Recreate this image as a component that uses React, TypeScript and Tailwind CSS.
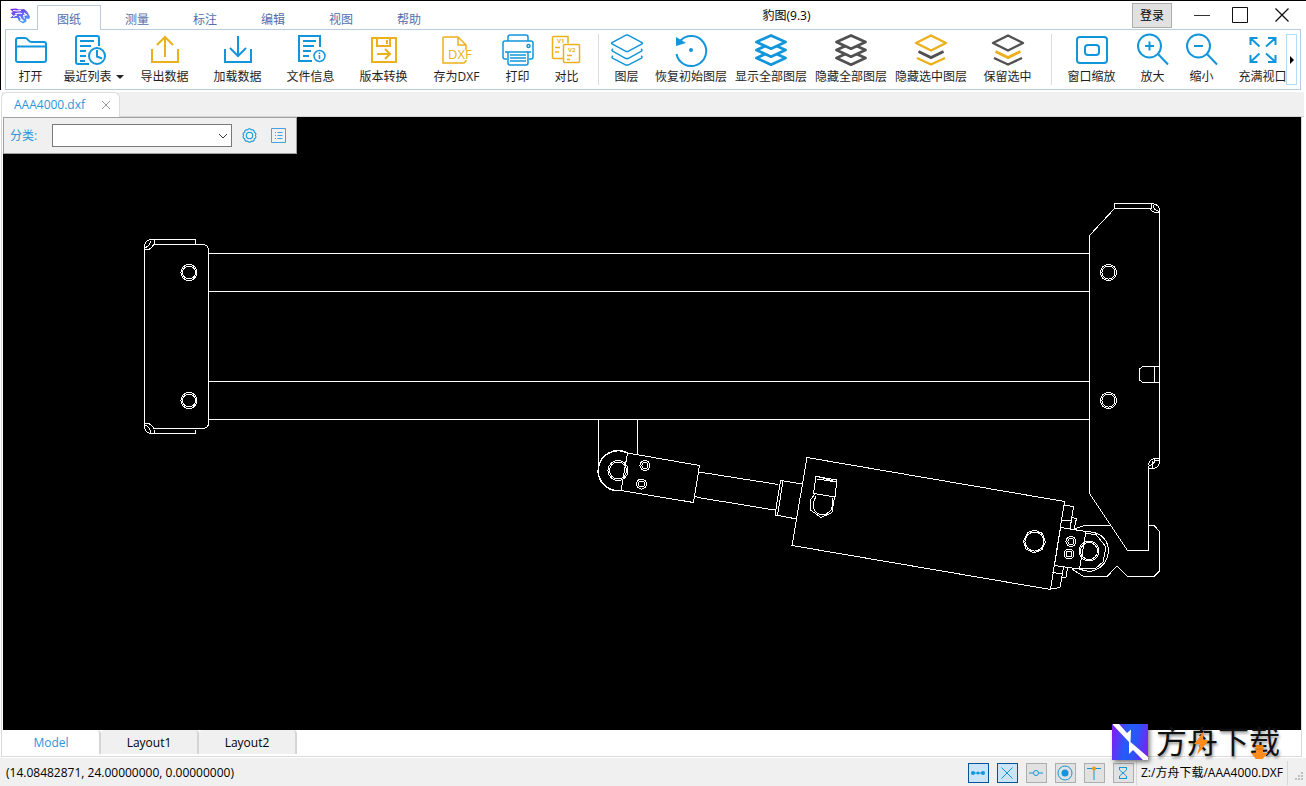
import { useState } from "react";
import type { ReactNode } from "react";
import clsx from "clsx";

const BLUE = "#1296db";
const GOLD = "#ebb01c";
const DARK = "#515151";

interface IconProps {
  color?: string;
  width?: number;
  children: ReactNode;
}

const Icon = ({ color = BLUE, width = 2, children }: IconProps) => (
  <svg
    className="size-8 shrink-0 overflow-visible"
    viewBox="0 0 32 32"
    fill="none"
    stroke={color}
    strokeWidth={width}
    aria-hidden="true"
  >
    {children}
  </svg>
);

const OpenIcon = () => (
  <Icon>
    <path d="M1 6a2 2 0 0 1 2-2h7c3 0 3 4 7 4h12a2 2 0 0 1 2 2v16a2 2 0 0 1-2 2H3a2 2 0 0 1-2-2zM1 12.500h30" />
  </Icon>
);

const RecentIcon = () => (
  <Icon>
    <path d="M25 12V4a2 2 0 0 0-2-2H4a2 2 0 0 0-2 2v24a2 2 0 0 0 2 2h11" />
    <path d="M6 7h14M6 12h11M6 17h6M6 22h6M6 27h5" />
    <circle cx="23" cy="22" r="8" />
    <path d="M23 16v6.500l5 2" />
  </Icon>
);

const ExportIcon = () => (
  <Icon color={GOLD}>
    <path d="M3 15v13h26V15M16 23V3M8 11l8-8 8 8" />
  </Icon>
);

const ImportIcon = () => (
  <Icon>
    <path d="M3 15v13h26V15M16 2v20M8 14l8 8 8-8" />
  </Icon>
);

const InfoIcon = () => (
  <Icon>
    <path d="M25 13V2H4v25h13M8 7h13M8 12h11M8 17h8M8 22h6" />
    <circle cx="24.500" cy="22" r="5.500" strokeWidth="1.500" />
    <path d="M24.500 18.500v1.500M24.500 21v4" strokeWidth="1.500" />
  </Icon>
);

const ConvertIcon = () => (
  <Icon color={GOLD}>
    <path d="M4 4h24v24H4zM9 4v8h13V4M19 6v4M9 20h13M17 15l5 5-5 5" />
  </Icon>
);

const DxfIcon = () => (
  <Icon color={GOLD} width={1.5}>
    <path d="M25 16V11l-8-8H3a1 1 0 0 0-1 1v25h21l2-2v-1M17 3v8h8" />
    <text x="7" y="25" fontSize="13" fill={GOLD} stroke="none" className="font-['Open_Sans']">
      DXF
    </text>
  </Icon>
);

const PrintIcon = () => (
  <Icon width={1.5}>
    <path d="M6 7V3a2 2 0 0 1 2-2h16a2 2 0 0 1 2 2v4M5 25H3a2 2 0 0 1-2-2V9a2 2 0 0 1 2-2h26a2 2 0 0 1 2 2v14a2 2 0 0 1-2 2h-2" />
    <path d="M3 18h26M6 18v11a2 2 0 0 0 2 2h16a2 2 0 0 0 2-2V18M8 21h16M8 24h16M8 27h16" />
    <circle cx="26.500" cy="12" r="1.500" />
  </Icon>
);

const CompareIcon = () => (
  <Icon color={GOLD} width={1.5}>
    <path d="M12 24.500H2.500a1 1 0 0 1-1-1V3.500a1 1 0 0 1 1-1H17v7M4 13.500h5M4 18h4" />
    <rect x="12.500" y="10.500" width="16" height="18" rx="1" />
    <path d="M16 21.500h5M16 25.500h3" />
    <g fontSize="6" fontWeight="700" fill={GOLD} stroke="none" className="font-['Open_Sans']">
      <text x="6" y="9">V1</text>
      <text x="17" y="18">V2</text>
    </g>
  </Icon>
);

const LayersIcon = () => (
  <Icon width={1.5}>
    <path d="M14.500 1.300q1.500-.7 3 0L31 8.500q.8.800 0 1.500l-13.500 7.200q-1.500.7-3 0L1 10q-.8-.7 0-1.500z" />
    <path d="M2 15q-2 1.200 0 2.300l12.500 7q1.500.7 3 0L30 17.300q2-1.100 0-2.300M2 22q-2 1.200 0 2.300l12.500 6.500q1.500.7 3 0L30 24.300q2-1.100 0-2.300" />
  </Icon>
);

const RestoreIcon = () => (
  <Icon>
    <path d="M5.500 6.500A15 15 0 1 1 1.500 20" />
    <path d="M1 3v9l10-3z" fill={BLUE} stroke="none" />
    <circle cx="16" cy="16" r="2" fill={BLUE} stroke="none" />
  </Icon>
);

const StackIcon = ({ color }: { color: string }) => (
  <Icon color={color} width={2.8}>
    <g fill="#fff" strokeLinejoin="round">
      <path d="M16 17.500L30.500 24 16 30.700 1.500 24Z" />
      <path d="M16 9.500L30.500 16 16 22.700 1.500 16Z" />
      <path d="M16 1.400L30.500 8 16 14.700 1.500 8Z" />
    </g>
  </Icon>
);

const PartStackIcon = ({ top, middle, bottom }: { top: string; middle: string; bottom: string }) => (
  <Icon width={2.4}>
    <path d="M16 1.500L31 9 16 16.500 1 9Z" stroke={top} strokeLinejoin="round" />
    <path d="M3.500 17.500L16 23.500l12.500-6" stroke={middle} strokeWidth="3" />
    <path d="M2 24L16 30.500 30 24" stroke={bottom} />
  </Icon>
);

const WindowZoomIcon = () => (
  <Icon>
    <rect x="1" y="3" width="30" height="26" rx="3" />
    <rect x="9" y="11" width="14" height="10" rx="3" />
  </Icon>
);

const ZoomIcon = ({ plus }: { plus?: boolean }) => (
  <Icon>
    <circle cx="12.500" cy="12" r="11.500" />
    <path d="M21 20l10 10.500M8 12h9" />
    {plus && <path d="M12.500 7.500v9" />}
  </Icon>
);

const FitIcon = () => (
  <Icon>
    <path d="M3.500 11V4h7M4 4.500l8.500 8M21 4h7.500v7M28 4.500l-9 8M3.500 21v7h7M4 27.500l8.500-8M21 28h7.500v-7M28 27.500l-9-8" />
  </Icon>
);

interface ToolProps {
  label: string;
  icon: ReactNode;
  dropdown?: boolean;
}

const Tool = ({ label, icon, dropdown }: ToolProps) => (
  <button
    type="button"
    className={clsx(
      "flex shrink-0 flex-col items-center pt-1 hover:bg-sky-50",
      label.length <= 2 ? "w-[49px]" : label.length === 6 ? "w-20" : "w-[73px]",
      dropdown && "pr-1"
    )}
  >
    {icon}
    <span className={clsx("flex items-center gap-1 text-xs leading-[22px] whitespace-nowrap", dropdown && "pl-2")}>
      {label}
      {dropdown && <span className="border-x-4 border-t-4 border-x-transparent border-t-[#222]" />}
    </span>
  </button>
);

const Divider = () => <span className="my-1 mr-[3px] ml-[7px] w-px shrink-0 bg-[#dcdcdc]" />;

const menus = ["图纸", "测量", "标注", "编辑", "视图", "帮助"];

const LeopardLogo = () => (
  <svg className="h-4 w-5" viewBox="0 0 20 16" fill="none" aria-hidden="true">
    <defs>
      <linearGradient id="leopard" x1="0.200" y1="0" x2="0.600" y2="1">
        <stop offset="0" stopColor="#7a2cf0" />
        <stop offset="1" stopColor="#4aa4fb" />
      </linearGradient>
    </defs>
    <path
      d="M0 1l6-.5 3 1 5-.5c2 1 3 3 4 4l2 4-1 2-3-.5.500 3L13 15.500 9 13l-1.500-3L0 10l3-2.500L1 5l2-1z"
      fill="url(#leopard)"
    />
    <path
      d="M3 2.500l4 .5 4-.5M5 6l4-1 3 .5M3 8.500l4-1.500M9.500 8l2 3.500 2 1.500M14 5l2.500 2-3 .5 1 3M10 12l3 1"
      stroke="#fff"
      strokeWidth="1.100"
    />
  </svg>
);

const TitleBar = ({ menu, setMenu }: { menu: string; setMenu: (m: string) => void }) => (
  <header className="flex h-7 items-stretch">
    <div className="flex w-9 items-center justify-center pt-0.5 pl-0.5">
      <LeopardLogo />
    </div>
    <nav className="flex gap-1 pt-1">
      {menus.map((m) => (
        <button
          key={m}
          type="button"
          onClick={() => setMenu(m)}
          className={clsx(
            "w-16 border border-b-0 pt-1 text-xs leading-4 text-[#4f70ae]",
            m === menu ? "relative -mb-px border-[#b9cbdc] bg-white" : "-mb-px border-transparent"
          )}
        >
          {m}
        </button>
      ))}
    </nav>
    <h1 className="flex flex-1 items-center justify-center pt-0.5 text-xs text-black">豹图(9.3)</h1>
    <button type="button" className="mt-0.5 h-[25px] w-10 border border-[#adadad] bg-[#e1e1e1] text-xs text-black">
      登录
    </button>
    <div className="ml-3.5 flex gap-1 pr-1">
      <button type="button" aria-label="最小化" className="flex w-8 items-center justify-center">
        <svg className="size-4" viewBox="0 0 16 16" stroke="#333" aria-hidden="true">
          <path d="M0 8.500h16" />
        </svg>
      </button>
      <button type="button" aria-label="最大化" className="flex w-9 items-center justify-center">
        <svg className="size-4" viewBox="0 0 16 16" fill="none" stroke="#111" aria-hidden="true">
          <path d="M.5.500h15v15H.5z" />
        </svg>
      </button>
      <button type="button" aria-label="关闭" className="flex w-10 items-center justify-center">
        <svg className="size-4" viewBox="0 0 16 16" stroke="#111" strokeWidth="1.300" aria-hidden="true">
          <path d="M1.500 1.500l13 13M14.500 1.500l-13 13" />
        </svg>
      </button>
    </div>
  </header>
);

const Ribbon = () => (
  <div className="mr-[5px] ml-1 flex h-[61px] border border-[#b9cbdc] bg-white text-[#1e1e1e]">
    <div className="flex min-w-0 flex-1 overflow-hidden">
      <Tool label="打开" icon={<OpenIcon />} />
      <Tool label="最近列表" icon={<RecentIcon />} dropdown />
      <Tool label="导出数据" icon={<ExportIcon />} />
      <Tool label="加载数据" icon={<ImportIcon />} />
      <Tool label="文件信息" icon={<InfoIcon />} />
      <Tool label="版本转换" icon={<ConvertIcon />} />
      <Tool label="存为DXF" icon={<DxfIcon />} />
      <Tool label="打印" icon={<PrintIcon />} />
      <Tool label="对比" icon={<CompareIcon />} />
      <Divider />
      <Tool label="图层" icon={<LayersIcon />} />
      <Tool label="恢复初始图层" icon={<RestoreIcon />} />
      <Tool label="显示全部图层" icon={<StackIcon color={BLUE} />} />
      <Tool label="隐藏全部图层" icon={<StackIcon color={DARK} />} />
      <Tool label="隐藏选中图层" icon={<PartStackIcon top={GOLD} middle={DARK} bottom={GOLD} />} />
      <Tool label="保留选中" icon={<PartStackIcon top={DARK} middle={GOLD} bottom={DARK} />} />
      <Divider />
      <Tool label="窗口缩放" icon={<WindowZoomIcon />} />
      <Tool label="放大" icon={<ZoomIcon plus />} />
      <Tool label="缩小" icon={<ZoomIcon />} />
      <Tool label="充满视口" icon={<FitIcon />} />
    </div>
    <button
      type="button"
      aria-label="更多"
      className="my-1 mr-[3px] flex w-[11px] items-center justify-center border border-[#b5dcf5] bg-white"
    >
      <span className="border-y-4 border-l-4 border-y-transparent border-l-black" />
    </button>
  </div>
);

const CornerTopLeft = () => (
  <path d="M144.500 248V245.500Q145.500 240 151.500 239.500H195.500V243.500M154.500 239.500V243.500M144.500 249.500H148.500Q152.500 248 153.500 244.500M150.500 240.500Q150.500 246 145.500 247.500" />
);

const Ring = ({ x, y, r, inner }: { x: number; y: number; r: number; inner: number }) => (
  <>
    <circle cx={x} cy={y} r={r} />
    <circle cx={x} cy={y} r={inner} />
  </>
);

const Drawing = () => (
  <svg
    className="absolute inset-0 size-full"
    viewBox="3 117 1298 613"
    fill="none"
    stroke="#fff"
    shapeRendering="crispEdges"
    aria-hidden="true"
  >
    {/* beams */}
    <path d="M208 253.500H1089M208 291.500H1089M208 381.500H1089M208 419.500H1089" />

    {/* left end plate */}
    <path d="M144.500 245V428M153 244.500H203Q208.500 245 208.500 250.500V423Q208.500 428 203 428.500H153" />
    <CornerTopLeft />
    <g transform="matrix(1 0 0 -1 0 673)">
      <CornerTopLeft />
    </g>
    <Ring x={189} y={272.5} r={8} inner={6.5} />
    <Ring x={189} y={400.5} r={8} inner={6.5} />

    {/* right end plate */}
    <path d="M1151 208.500H1114.500L1089.500 235.500V493.500L1127.500 550.500H1148.500V465.500" />
    <path d="M1114.500 208.500V203.500H1153Q1159.500 205 1159.500 211V462M1151.500 203.500V208.500M1150 208.500Q1152 213 1159 213M1153 204.500Q1153 210 1159 211.500" />
    <path d="M1159.500 366.500H1142.500L1139.500 369V380L1142.500 382.500H1159.500M1154.500 366.500V382.500" />
    <path d="M1148.500 465Q1149.500 459 1155 458.500H1159.500V462Q1158.500 468 1153 468.500H1148.500M1154.500 459V460.500H1159M1152 461V468M1149 465.500Q1154 465 1155 460" />
    <Ring x={1108.5} y={272.5} r={8} inner={6.5} />
    <Ring x={1108.5} y={400.5} r={8} inner={6.5} />

    {/* hook */}
    <path d="M1148.500 525.500H1154L1159.500 531.500V571L1154 576.500H1127.500L1117 566L1107 576.500H1083.500L1072 569M1074 529L1085 525.500H1111" />

    {/* bracket and rod eye */}
    <path d="M598.500 419.500V471M637.500 419.500V454" />
    <path d="M627.500 453A20 20 0 1 0 621 490.500" strokeWidth="1.500" />
    <path d="M627.500 453L699.500 465.500L693.500 502.500L621 490.500ZM698 472.500L702 472.500L778.500 484.500M695 496L698 497.500L774.500 510" />
    <Ring x={618} y={470.5} r={10} inner={8.5} />
    <Ring x={645} y={465.5} r={5} inner={3} />
    <Ring x={641.5} y={484} r={5} inner={3} />

    {/* cylinder */}
    <path d="M802 484L780.500 480.500L775 515L797 519M783 481L777.500 515.500" />
    <path d="M807 457.500L1064.500 501.500L1050.500 589.500L792 545.500Z" />
    <path d="M816 476.500L837 480L835 497L813.500 493.500ZM817 479L837 482M818 476.500L836 482M815 494L810.500 500V510L821 517.500L832 512.500L834.500 497" />
    <path d="M816 496Q810 508 817 513Q824 518 831 510Q834 503 832 498" />
    <path d="M1028 532.500L1035 530L1042.500 533.500L1045.500 542L1042 549.500L1034 553L1026 549L1023.500 541Z" />
    <circle cx="1034.500" cy="541.500" r="9.500" />

    {/* rear flange and clevis */}
    <path d="M1064 505L1073.500 506.500L1070 529M1061.500 520L1071 521M1072 517.500L1076.500 518.500L1074 529M1060 587.500L1050.500 589M1060 587.500L1063.500 567M1052.500 572.500L1062.500 574M1067.500 568L1066 577.500L1062 578" />
    <path d="M1060.500 527.500L1086 531.500L1079.500 569L1054.500 565.500Z" />
    <path d="M1086 531.500Q1106 532 1108.500 549Q1108 568 1090 571.500Q1084 571 1079.500 569M1086 533.500L1096 534.500L1106 547L1103 562L1096 568L1080 568" />
    <Ring x={1089} y={551} r={10} inner={8.5} />
    <Ring x={1071} y={541.5} r={5} inner={3} />
    <Ring x={1069} y={554} r={5} inner={3} />
  </svg>
);

const LayerFilter = () => (
  <div className="absolute top-0 left-0 flex h-[37px] w-[294px] items-center border border-[#a0a0a0] bg-[#f0f0f0] pl-1.5 text-[#2a96d8]">
    <label htmlFor="category" className="w-[42px] text-xs">
      分类:
    </label>
    <div className="relative">
      <select id="category" className="block h-[23px] w-[180px] appearance-none border border-[#7a7a7a] bg-white text-xs" />
      <svg className="pointer-events-none absolute top-2 right-1 h-2 w-2.5" viewBox="0 0 10 8" fill="none" stroke="#333" aria-hidden="true">
        <path d="M1 2l4 4 4-4" />
      </svg>
    </div>
    <button type="button" aria-label="设置" className="ml-2.5">
      <svg className="size-[15px]" viewBox="0 0 14 14" fill="none" stroke="#1296db" aria-hidden="true">
        <path d="M5.200 1.700Q7-.4 8.800 1.700q2.800-.3 2.700 2.200 2.400 1.200 1 3.100 1.400 1.900-1 3.100.1 2.500-2.700 2.200Q7 14.400 5.200 12.300q-2.800.3-2.700-2.200-2.400-1.200-1-3.100-1.400-1.900 1-3.100-.1-2.500 2.700-2.200z" />
        <circle cx="7" cy="7" r="3" />
      </svg>
    </button>
    <button type="button" aria-label="列表" className="ml-[14px]">
      <svg className="size-[15px]" viewBox="0 0 15 15" fill="none" stroke="#3fa5df" aria-hidden="true">
        <path d="M.5.500h14v14H.5zM4 4.500h1M6.500 4.500h5M4 7.500h1M6.500 7.500h5M4 10.500h1M6.500 10.500h5" />
      </svg>
    </button>
  </div>
);

const sheets = ["Model", "Layout1", "Layout2"];

const snapModes = [
  {
    name: "线段",
    on: true,
    icon: <path d="M3 8h10" stroke={BLUE} />,
    extra: (
      <g fill={BLUE}>
        <circle cx="3" cy="8" r="2" />
        <circle cx="8" cy="8" r="1.500" />
        <circle cx="13" cy="8" r="2" />
      </g>
    ),
  },
  { name: "交点", on: true, icon: <path d="M2.500 2.500l11 11M13.500 2.500l-11 11" stroke={BLUE} />, extra: null },
  {
    name: "中点",
    on: false,
    icon: <path d="M1 8h4M11 8h4" stroke={BLUE} />,
    extra: <circle cx="8" cy="8" r="2.500" stroke={BLUE} />,
  },
  {
    name: "圆心",
    on: false,
    icon: <circle cx="8" cy="8" r="7" stroke={BLUE} />,
    extra: <circle cx="8" cy="8" r="3.500" fill={BLUE} />,
  },
  {
    name: "垂足",
    on: false,
    icon: <path d="M1 3.500h14M8 4v11" stroke={BLUE} />,
    extra: <circle cx="8" cy="3.500" r="2" fill="#f09a0a" />,
  },
  {
    name: "最近点",
    on: false,
    icon: <path d="M4 2.500h8M4 13.500h8M4.500 2.500v2.500l7 6v2.500M11.500 2.500v2.500l-7 6v2.500" stroke={BLUE} />,
    extra: null,
  },
];

const StatusBar = () => (
  <footer className="flex h-7 shrink-0 items-center bg-[#f0f0f0] pt-0.5 pl-1.5 text-xs text-black">
    <span className="flex-1">(14.08482871, 24.00000000, 0.00000000)</span>
    <div className="flex gap-2">
      {snapModes.map((mode) => (
        <button
          key={mode.name}
          type="button"
          aria-label={mode.name}
          aria-pressed={mode.on}
          className={clsx(
            "flex h-5 w-[21px] items-center justify-center border",
            mode.on ? "border-[#005499] bg-[#cce4f7]" : "border-[#adadad] bg-[#e1e1e1]"
          )}
        >
          <svg className="size-4" viewBox="0 0 16 16" fill="none" aria-hidden="true">
            {mode.icon}
            {mode.extra}
          </svg>
        </button>
      ))}
    </div>
    <span className="ml-0.5 border-x border-[#d7d7d7] px-1 leading-6">Z:/方舟下载/AAA4000.DXF</span>
    <svg className="mt-2 ml-1.5 size-3" viewBox="0 0 12 12" fill="#bfbfbf" aria-hidden="true">
      <path d="M7 1h2v2H7zM4 4h2v2H4zM7 4h2v2H7zM1 7h2v2H1zM4 7h2v2H4zM7 7h2v2H7z" />
    </svg>
  </footer>
);

const Watermark = () => (
  <div className="pointer-events-none absolute right-[26px] bottom-[26px] flex items-center gap-2">
    <svg className="size-9 drop-shadow-[2px_2px_2px_rgba(0,0,0,0.5)]" viewBox="0 0 36 36" aria-hidden="true">
      <defs>
        <linearGradient id="mark" x1="0" y1="0.400" x2="1" y2="0.600">
          <stop offset="0" stopColor="#7a22f5" />
          <stop offset="0.400" stopColor="#235cf8" />
          <stop offset="0.650" stopColor="#2b55f8" />
          <stop offset="1" stopColor="#7a22f5" />
        </linearGradient>
      </defs>
      <path d="M0 0h36v36H0z" fill="url(#mark)" />
      <path d="M1 0h6l8 9 4-3.500L18.500 18 36 33v3h-5L21 26l-4 4V18L1 1z" fill="#fff" />
    </svg>
    <div className="relative pb-0.5 text-[31px] leading-8 text-[#111] [text-shadow:1px_2px_3px_rgba(0,0,0,0.45)]">
      方舟下载
      <svg className="absolute inset-0 size-full" viewBox="0 0 124 34" fill="#ff8c1a" aria-hidden="true">
        <path d="M48 6L38 19h6l-3 11 12-15h-6zM100 20h7v8h5l-9 10-8-10h5z" />
        <path d="M99 21h9M99 24h9" stroke="#c96a0a" />
      </svg>
    </div>
  </div>
);

const App = () => {
  const [menu, setMenu] = useState("图纸");
  const [sheet, setSheet] = useState("Model");

  return (
    <div className="relative flex h-screen flex-col overflow-hidden border-t border-black bg-white font-['Open_Sans','Noto_Sans_CJK_SC',sans-serif]">
      <div className="shrink-0 border-l border-black">
        <TitleBar menu={menu} setMenu={setMenu} />
        <Ribbon />
      </div>

      <main className="flex min-h-0 flex-1 flex-col pt-0.5">
        <div className="mx-0.5 flex h-[25px] shrink-0 items-stretch bg-[#f0f0f0]">
          <div className="-ml-px flex w-[119px] items-center justify-between rounded-t-md border border-b-0 border-[#dcdcdc] bg-white pr-2 pl-3 text-xs text-[#2a96d8]">
            AAA4000.dxf
            <button type="button" aria-label="关闭图纸">
              <svg className="size-2.5" viewBox="0 0 10 10" stroke="#999" aria-hidden="true">
                <path d="M1 1l8 8M9 1l-8 8" />
              </svg>
            </button>
          </div>
          <div className="flex-1 border-b border-[#d5d5d5]" />
        </div>

        <div className="mr-1 ml-px flex min-h-0 flex-1 flex-col border-x border-b border-[#d9d9d9] bg-white pb-0.5 pl-px">
          <div className="relative min-h-0 flex-1 bg-black">
            <Drawing />
            <LayerFilter />
          </div>
          <div className="flex h-6 shrink-0">
            {sheets.map((s) => (
              <button
                key={s}
                type="button"
                onClick={() => setSheet(s)}
                className={clsx(
                  "w-[98px] rounded-t-sm border-r-2 border-[#d5d5d5] pt-0.5 text-xs",
                  s === sheet ? "bg-white text-[#2a96d8]" : "bg-[#f0f0f0] text-black"
                )}
              >
                {s}
              </button>
            ))}
          </div>
        </div>
      </main>

      <div className="h-px shrink-0 bg-white" />
      <StatusBar />
      <Watermark />
    </div>
  );
};

export default App;
